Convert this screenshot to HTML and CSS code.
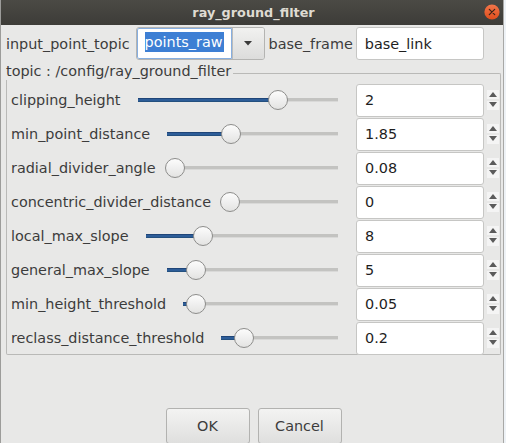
FILE: index.html
```html
<!DOCTYPE html>
<html>
<head>
<meta charset="utf-8">
<link rel="stylesheet" href="styles.css">
</head>
<body>
<div class="window">
  <div class="titlebar">
    <span class="title">ray_ground_filter</span>
    <span class="close">
      <svg width="16" height="16" viewBox="0 0 16 16">
        <defs>
          <linearGradient id="cg" x1="0" y1="0" x2="0" y2="1">
            <stop offset="0" stop-color="#f3764a"/>
            <stop offset="1" stop-color="#df4d1c"/>
          </linearGradient>
        </defs>
        <circle cx="8" cy="8" r="7.6" fill="url(#cg)"/>
        <path d="M5.3 5.3 L10.7 10.7 M10.7 5.3 L5.3 10.7" stroke="#3b2418" stroke-width="1.2" stroke-linecap="round"/>
      </svg>
    </span>
  </div>
  <div class="content">
    <div class="toprow">
      <span class="lbl">input_point_topic</span>
      <div class="combo">
        <div class="combo-edit"><span class="sel">points_raw</span></div>
        <div class="combo-btn">
          <svg width="8" height="5" viewBox="0 0 8 5"><polygon points="0,0 8,0 4,4.5" fill="#3a3a3a"/></svg>
        </div>
      </div>
      <span class="lbl lbl-base">base_frame</span>
      <div class="lineedit">base_link</div>
    </div>

    <div class="group">
      <div class="group-head">
        <span class="group-title">topic : /config/ray_ground_filter</span>
        <span class="group-rule"></span>
      </div>
      <div class="group-body">
        <div class="row">
          <span class="rlabel">clipping_height</span>
          <div class="slider" style="--p:0.707"><span class="groove"></span><span class="fill"></span><span class="handle"></span></div>
          <div class="spin"><div class="spin-field">2</div><svg class="arrows" width="16" height="20" viewBox="0 0 16 20"><rect x="3" y="0" width="12" height="9" fill="#f4f4f4"/><rect x="3" y="11" width="12" height="9" fill="#f4f4f4"/><polygon points="5,7 9,2 13,7" fill="#5b5b5b"/><polygon points="5,12 13,12 9,17" fill="#5b5b5b"/></svg></div>
        </div>
        <div class="row">
          <span class="rlabel">min_point_distance</span>
          <div class="slider" style="--p:0.373"><span class="groove"></span><span class="fill"></span><span class="handle"></span></div>
          <div class="spin"><div class="spin-field">1.85</div><svg class="arrows" width="16" height="20" viewBox="0 0 16 20"><rect x="3" y="0" width="12" height="9" fill="#f4f4f4"/><rect x="3" y="11" width="12" height="9" fill="#f4f4f4"/><polygon points="5,7 9,2 13,7" fill="#5b5b5b"/><polygon points="5,12 13,12 9,17" fill="#5b5b5b"/></svg></div>
        </div>
        <div class="row">
          <span class="rlabel">radial_divider_angle</span>
          <div class="slider" style="--p:0"><span class="groove"></span><span class="fill"></span><span class="handle"></span></div>
          <div class="spin"><div class="spin-field">0.08</div><svg class="arrows" width="16" height="20" viewBox="0 0 16 20"><rect x="3" y="0" width="12" height="9" fill="#f4f4f4"/><rect x="3" y="11" width="12" height="9" fill="#f4f4f4"/><polygon points="5,7 9,2 13,7" fill="#5b5b5b"/><polygon points="5,12 13,12 9,17" fill="#5b5b5b"/></svg></div>
        </div>
        <div class="row">
          <span class="rlabel">concentric_divider_distance</span>
          <div class="slider" style="--p:0"><span class="groove"></span><span class="fill"></span><span class="handle"></span></div>
          <div class="spin"><div class="spin-field">0</div><svg class="arrows" width="16" height="20" viewBox="0 0 16 20"><rect x="3" y="0" width="12" height="9" fill="#f4f4f4"/><rect x="3" y="11" width="12" height="9" fill="#f4f4f4"/><polygon points="5,7 9,2 13,7" fill="#5b5b5b"/><polygon points="5,12 13,12 9,17" fill="#5b5b5b"/></svg></div>
        </div>
        <div class="row">
          <span class="rlabel">local_max_slope</span>
          <div class="slider" style="--p:0.293"><span class="groove"></span><span class="fill"></span><span class="handle"></span></div>
          <div class="spin"><div class="spin-field">8</div><svg class="arrows" width="16" height="20" viewBox="0 0 16 20"><rect x="3" y="0" width="12" height="9" fill="#f4f4f4"/><rect x="3" y="11" width="12" height="9" fill="#f4f4f4"/><polygon points="5,7 9,2 13,7" fill="#5b5b5b"/><polygon points="5,12 13,12 9,17" fill="#5b5b5b"/></svg></div>
        </div>
        <div class="row">
          <span class="rlabel">general_max_slope</span>
          <div class="slider" style="--p:0.163"><span class="groove"></span><span class="fill"></span><span class="handle"></span></div>
          <div class="spin"><div class="spin-field">5</div><svg class="arrows" width="16" height="20" viewBox="0 0 16 20"><rect x="3" y="0" width="12" height="9" fill="#f4f4f4"/><rect x="3" y="11" width="12" height="9" fill="#f4f4f4"/><polygon points="5,7 9,2 13,7" fill="#5b5b5b"/><polygon points="5,12 13,12 9,17" fill="#5b5b5b"/></svg></div>
        </div>
        <div class="row">
          <span class="rlabel">min_height_threshold</span>
          <div class="slider" style="--p:0.073"><span class="groove"></span><span class="fill"></span><span class="handle"></span></div>
          <div class="spin"><div class="spin-field">0.05</div><svg class="arrows" width="16" height="20" viewBox="0 0 16 20"><rect x="3" y="0" width="12" height="9" fill="#f4f4f4"/><rect x="3" y="11" width="12" height="9" fill="#f4f4f4"/><polygon points="5,7 9,2 13,7" fill="#5b5b5b"/><polygon points="5,12 13,12 9,17" fill="#5b5b5b"/></svg></div>
        </div>
        <div class="row">
          <span class="rlabel">reclass_distance_threshold</span>
          <div class="slider" style="--p:0.183"><span class="groove"></span><span class="fill"></span><span class="handle"></span></div>
          <div class="spin"><div class="spin-field">0.2</div><svg class="arrows" width="16" height="20" viewBox="0 0 16 20"><rect x="3" y="0" width="12" height="9" fill="#f4f4f4"/><rect x="3" y="11" width="12" height="9" fill="#f4f4f4"/><polygon points="5,7 9,2 13,7" fill="#5b5b5b"/><polygon points="5,12 13,12 9,17" fill="#5b5b5b"/></svg></div>
        </div>
      </div>
    </div>

    <div class="buttons">
      <button class="btn">OK</button>
      <button class="btn">Cancel</button>
    </div>
  </div>
</div>
</body>
</html>
```

FILE: styles.css
```css
html, body {
  margin: 0;
  padding: 0;
}
body {
  width: 506px;
  height: 443px;
  overflow: hidden;
  background: #eef2f6;
  font-family: "DejaVu Sans", sans-serif;
  font-size: 14.4px;
  color: #3c3c3c;
}
.window {
  width: 504px;
  height: 443px;
  box-sizing: border-box;
  border-left: 1px solid #9c9c9a;
  border-right: 1px solid #a8a8a6;
  background: #e8e8e7;
  overflow: hidden;
}
.titlebar {
  position: relative;
  height: 25px;
  background: linear-gradient(#4b4a45, #3d3c38);
  display: flex;
  align-items: center;
  justify-content: center;
  padding-left: 3px;
}
.title {
  color: #dfdbd2;
  font-weight: bold;
  font-size: 12.8px;
  line-height: 25px;
}
.close {
  position: absolute;
  right: 3px;
  top: 4px;
  width: 16px;
  height: 16px;
  display: block;
}
.close svg { display: block; }
.content {
  padding: 2px 2px 0 5px;
}
.toprow {
  display: flex;
  align-items: center;
  height: 33px;
}
.lbl {
  white-space: nowrap;
}
.combo {
  margin-left: 6px;
  width: 129px;
  height: 33px;
  box-sizing: border-box;
  border: 1px solid #b4b4b2;
  border-radius: 3px;
  display: flex;
  overflow: hidden;
}
.combo-edit {
  width: 95px;
  box-sizing: border-box;
  background: #ffffff;
  border: 1px solid #86aee0;
  border-radius: 2px 0 0 2px;
  display: flex;
  align-items: center;
  padding-left: 7px;
}
.sel {
  background: #3d7fd4;
  color: #ffffff;
  line-height: 20px;
  padding-right: 1px;
  margin-top: -3px;
}
.combo-btn {
  flex: 1;
  background: linear-gradient(#f1f1f0, #dcdcdb);
  border-left: 1px solid #bcbcba;
  display: flex;
  align-items: center;
  justify-content: center;
}
.combo-btn svg { display: block; margin-top: -1px; }
.lbl-base {
  margin-left: 4px;
}
.lineedit {
  margin-left: 3px;
  width: 128px;
  height: 33px;
  box-sizing: border-box;
  background: #ffffff;
  border: 1px solid #c6c6c4;
  border-radius: 3px;
  padding-left: 8px;
  display: flex;
  align-items: center;
  color: #1e1e1e;
}
.group {
  margin-top: 4px;
}
.group-head {
  display: flex;
  height: 16px;
}
.group-title {
  white-space: nowrap;
  line-height: 16px;
  margin-top: -1px;
}
.group-rule {
  flex: 1;
  align-self: flex-end;
  height: 6px;
  margin-left: 2px;
  border-top: 1px solid #b9b9b7;
  border-right: 1px solid #b9b9b7;
  border-top-right-radius: 2px;
}
.group-body {
  border: 1px solid #b9b9b7;
  border-top: none;
  border-radius: 0 0 2px 2px;
  padding-top: 3px;
  height: 275px;
  box-sizing: border-box;
}
.row {
  display: flex;
  align-items: center;
  height: 34px;
  padding-left: 4px;
}
.rlabel {
  white-space: nowrap;
}
.slider {
  flex: 1;
  position: relative;
  height: 20px;
  margin: 0 10px 0 9px;
}
.groove {
  position: absolute;
  left: 8px;
  right: 8px;
  top: 8px;
  height: 3px;
  background: #c3c3c1;
  border-bottom: 1px solid #d9d9d8;
}
.fill {
  position: absolute;
  left: 8px;
  top: 8px;
  height: 4px;
  box-sizing: border-box;
  width: calc(var(--p) * (100% - 20px) + 2px);
  background: #2d5d98;
  border-top: 1px solid #1f4578;
  border-bottom: 1px solid #24507f;
}
.handle {
  position: absolute;
  top: 0;
  left: calc(var(--p) * (100% - 20px));
  width: 20px;
  height: 20px;
  box-sizing: border-box;
  border-radius: 50%;
  border: 1px solid #8d8d8b;
  background: linear-gradient(#fcfcfc, #e3e3e2);
}
.spin {
  display: flex;
  align-items: center;
}
.spin-field {
  width: 128px;
  height: 33px;
  box-sizing: border-box;
  background: #ffffff;
  border: 1px solid #c6c6c4;
  border-radius: 3px;
  padding-left: 8px;
  display: flex;
  align-items: center;
  color: #1e1e1e;
}
.arrows {
  display: block;
  width: 16px;
  height: 20px;
}
.buttons {
  display: flex;
  justify-content: center;
  gap: 8px;
  margin-top: 53px;
}
.btn {
  width: 84px;
  height: 36px;
  box-sizing: border-box;
  border: 1px solid #b2b2b0;
  border-radius: 3px;
  background: linear-gradient(#f3f3f2, #dfdfde);
  font-family: "DejaVu Sans", sans-serif;
  font-size: 14.4px;
  color: #3c3c3c;
  padding: 0 0 1px 0;
}
```
